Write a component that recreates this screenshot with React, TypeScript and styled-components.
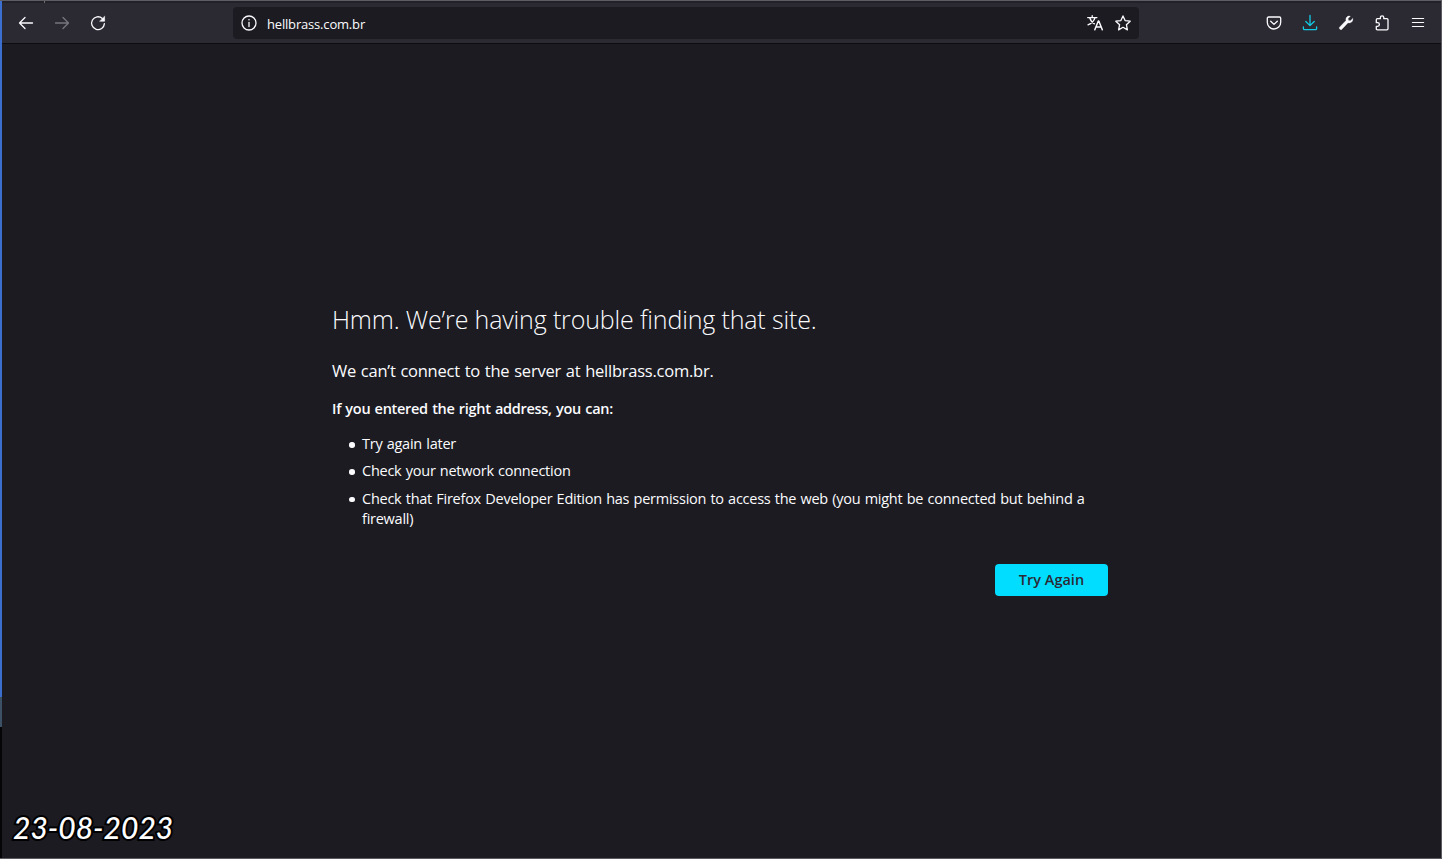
import React from 'react';
import styled, { createGlobalStyle } from 'styled-components';

const Global = createGlobalStyle`
  * { box-sizing: border-box; }
  html, body { margin: 0; background: #1c1b22; overflow: hidden; }
`;

const Window = styled.div`
  position: relative;
  display: flex;
  flex-direction: column;
  width: 1442px;
  height: 859px;
  background: #1c1b22;
  color: #fbfbfe;
  font-family: 'Open Sans', 'Noto Sans', sans-serif;
  border-top: 1px solid #5d5d63;
  border-right: 1px solid #5d5b61;
  border-bottom: 1px solid #5d5b61;
  overflow: hidden;
`;

const Edge = styled.div`
  position: absolute;
  left: 0;
  top: -1px;
  width: 1.5px;
  height: 859px;
  background: linear-gradient(#3a6fd0 0 697px, #3d5166 697px 727px, #050507 727px);
`;

const TabNotch = styled.div`
  position: absolute;
  left: 44px;
  top: 0;
  width: 1px;
  height: 2px;
  background: #6b6b70;
`;

const Toolbar = styled.header`
  display: flex;
  align-items: center;
  flex: none;
  height: 43px;
  padding: 0 15px 0 18px;
  background: #2b2a33;
  border-top: 2px solid #222129;
  border-bottom: 1px solid #0d0c11;
`;

const Group = styled.div<{ $gap: number }>`
  display: flex;
  align-items: center;
  gap: ${(p) => p.$gap}px;
`;

const IconButton = styled.span<{ $color?: string }>`
  display: flex;
  width: 16px;
  height: 16px;
  color: ${(p) => p.$color ?? '#fbfbfe'};
`;

const AddressBar = styled.div`
  display: flex;
  align-items: center;
  width: 906px;
  height: 32px;
  margin: 0 127px 0 127px;
  padding: 0 8px;
  border-radius: 4px;
  background: #1c1b22;
`;

const Url = styled.span`
  flex: 1;
  margin-left: 10px;
  padding-top: 1px;
  font-size: 13px;
  line-height: 20px;
  letter-spacing: -0.18px;
`;

const Page = styled.main`
  flex: 1;
  padding: 257px 0 0 332px;
`;

const Content = styled.section`
  display: flex;
  flex-direction: column;
  width: 776px;
`;

const Title = styled.h1`
  margin: 0;
  font-size: 25px;
  font-weight: 300;
  line-height: 36px;
  letter-spacing: -0.15px;
`;

const Lead = styled.p`
  margin: 21px 0 0;
  font-size: 16.5px;
  line-height: 26px;
  letter-spacing: -0.24px;
  word-spacing: 0.8px;
`;

const Strong = styled.p`
  margin: 14px 0 0;
  font-size: 14.5px;
  font-weight: 600;
  line-height: 22px;
  letter-spacing: -0.29px;
  word-spacing: 0.8px;
`;

const Tips = styled.ul`
  display: flex;
  flex-direction: column;
  gap: 7.4px;
  margin: 14px 0 0;
  padding: 0 0 0 30px;
  list-style: none;
`;

const Tip = styled.li`
  position: relative;
  font-size: 14.5px;
  line-height: 20px;
  letter-spacing: -0.25px;
  word-spacing: 0.75px;

  &::before {
    content: '';
    position: absolute;
    left: -13px;
    top: 8px;
    width: 5.5px;
    height: 5.5px;
    border-radius: 50%;
    background: #fbfbfe;
  }
`;

const RetryButton = styled.button`
  align-self: flex-end;
  width: 113px;
  height: 32px;
  margin-top: 35.2px;
  padding: 0;
  border: 0;
  border-radius: 4px;
  background: #00ddff;
  color: #2b2a33;
  font: 600 14.5px 'Open Sans', 'Noto Sans', sans-serif;
`;

const DateStamp = styled.div`
  position: absolute;
  left: 13px;
  top: 806px;
  color: #fff;
  font: italic 500 30px/40px Lato, sans-serif;
  letter-spacing: 0px;
  -webkit-text-stroke: 4px #000;
  paint-order: stroke fill;
`;

const Svg = ({ children }: { children: React.ReactNode }) => (
  <svg
    width="16"
    height="16"
    viewBox="0 0 16 16"
    fill="none"
    stroke="currentColor"
    strokeWidth="1.3"
    strokeLinecap="round"
    strokeLinejoin="round"
    overflow="visible"
  >
    {children}
  </svg>
);

const Back = () => <Svg><path d="M14.5 8H1.5M7 2.5 1.5 8 7 13.5" /></Svg>;
const Forward = () => <Svg><path d="M1.5 8h13M9 2.5 14.5 8 9 13.5" /></Svg>;
const Reload = () => (
  <Svg>
    <path d="M14.4 8.6A6.4 6.4 0 1 1 12.3 3.4" />
    <path d="M14.6 1.6v4.6H10z" fill="currentColor" strokeWidth="0.6" />
  </Svg>
);
const Info = () => (
  <Svg>
    <circle cx="8" cy="8" r="7" />
    <path d="M8 7.5v4" />
    <circle cx="8" cy="4.8" r="0.8" fill="currentColor" stroke="none" />
  </Svg>
);
const Translate = () => (
  <Svg>
    <path d="M.7 2.6h9.2M5.2.7v1.9M8 2.8C7 6 4.5 8.5 1 9.8M2.7 2.8C3.7 6 5.2 7.7 7.4 8.8" />
    <path d="M7.8 14.8 11.3 6h.5l3.5 8.8M9 12h5.2" strokeWidth="1.5" />
  </Svg>
);
const Star = () => (
  <Svg>
    <path d="M8 .9l2.1 4.7 5.1.6-3.8 3.5 1 5.2L8 12.3l-4.4 2.6 1-5.2L.8 6.2l5.1-.6z" />
  </Svg>
);
const Pocket = () => (
  <Svg>
    <path d="M2.6 2h10.8c.8 0 1.3.5 1.3 1.3v4A6.7 6.7 0 0 1 1.3 7.3v-4C1.3 2.5 1.8 2 2.6 2z" />
    <path d="M4.7 6.2 8 9.4l3.3-3.2" />
  </Svg>
);
const Download = () => (
  <Svg>
    <path d="M8 .5v10M3.8 6.5 8 10.6l4.2-4.1M1.4 12v1.4c0 .8.5 1.3 1.3 1.3h10.6c.8 0 1.3-.5 1.3-1.3V12" />
  </Svg>
);
const Wrench = () => (
  <Svg>
    <path
      d="M14.7 3.6 12.4 5.8 10.5 5.4 10.1 3.6 12.3 1.2C9.7.4 7.3 2.6 8 5.5L1.5 12.2C.5 13.3 2.5 15.4 3.7 14.4L10.1 7.8C13 8.6 15.4 6.4 14.7 3.6z"
      fill="currentColor"
      strokeWidth="0.3"
    />
  </Svg>
);
const Extension = () => (
  <Svg>
    <path d="M2.3 6V4.8c0-.7.4-1.1 1.1-1.1h3V2.5a1.7 1.7 0 0 1 3.4 0v1.2h3.1c.7 0 1.1.4 1.1 1.1v9c0 .7-.4 1.1-1.1 1.1H3.4c-.7 0-1.1-.4-1.1-1.1v-2.5h1.3a1.8 1.8 0 0 0 0-3.6H2.3z" />
  </Svg>
);
const Menu = () => (
  <Svg><path d="M2.4 3.5h11.2M2.4 7.5h11.2M2.4 11.5h11.2" strokeWidth="1.2" /></Svg>
);

const tips = [
  'Try again later',
  'Check your network connection',
  'Check that Firefox Developer Edition has permission to access the web (you might be connected but behind a firewall)',
];

export default function App() {
  return (
    <Window>
      <Global />
      <Toolbar>
        <Group $gap={20}>
          <IconButton><Back /></IconButton>
          <IconButton $color="#77767d"><Forward /></IconButton>
          <IconButton><Reload /></IconButton>
        </Group>
        <AddressBar>
          <IconButton><Info /></IconButton>
          <Url>hellbrass.com.br</Url>
          <Group $gap={12}>
            <IconButton><Translate /></IconButton>
            <IconButton><Star /></IconButton>
          </Group>
        </AddressBar>
        <Group $gap={20}>
          <IconButton><Pocket /></IconButton>
          <IconButton $color="#12cbe6"><Download /></IconButton>
          <IconButton><Wrench /></IconButton>
          <IconButton><Extension /></IconButton>
          <IconButton><Menu /></IconButton>
        </Group>
      </Toolbar>
      <Page>
        <Content>
          <Title>Hmm. We’re having trouble finding that site.</Title>
          <Lead>We can’t connect to the server at hellbrass.com.br.</Lead>
          <Strong>If you entered the right address, you can:</Strong>
          <Tips>
            {tips.map((tip) => <Tip key={tip}>{tip}</Tip>)}
          </Tips>
          <RetryButton>Try Again</RetryButton>
        </Content>
      </Page>
      <DateStamp>23-08-2023</DateStamp>
      <Edge />
      <TabNotch />
    </Window>
  );
}
